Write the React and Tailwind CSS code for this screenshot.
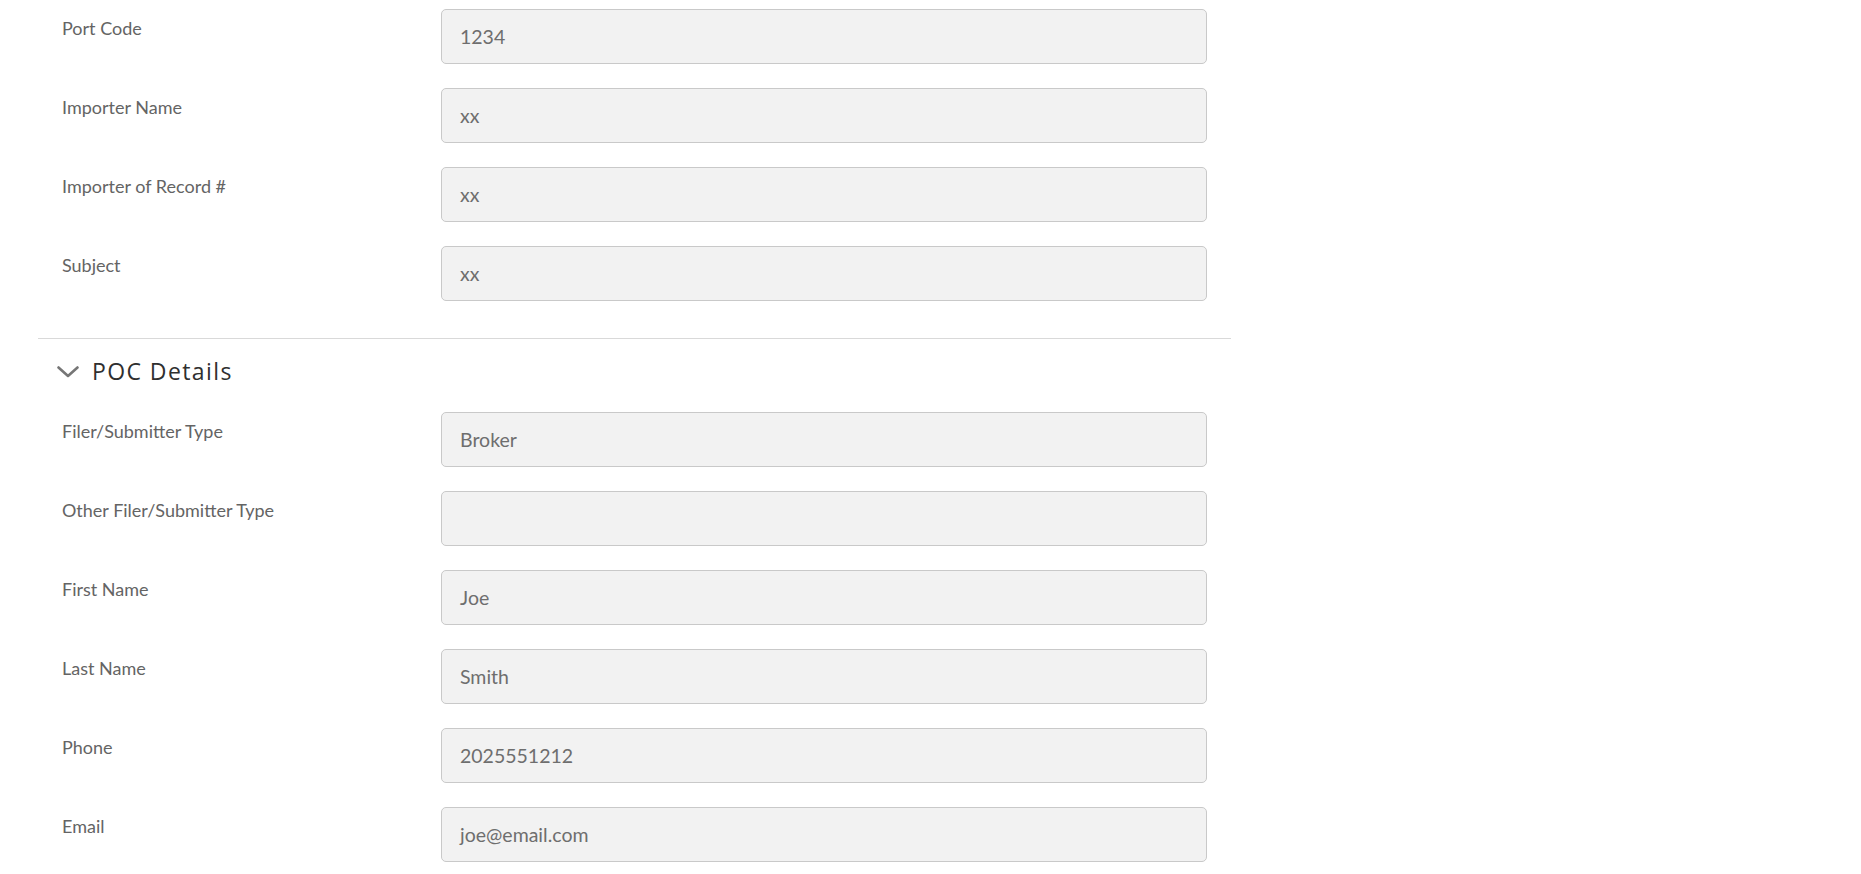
const importFields = [
  { label: "Port Code", value: "1234" },
  { label: "Importer Name", value: "xx" },
  { label: "Importer of Record #", value: "xx" },
  { label: "Subject", value: "xx" },
];

const pocFields = [
  { label: "Filer/Submitter Type", value: "Broker" },
  { label: "Other Filer/Submitter Type", value: "" },
  { label: "First Name", value: "Joe" },
  { label: "Last Name", value: "Smith" },
  { label: "Phone", value: "2025551212" },
  { label: "Email", value: "joe@email.com" },
];

function FieldRow({ label, value }) {
  return (
    <div className="flex items-start">
      <label className="w-[403px] shrink-0 pt-[6px] pl-[24px] text-[18px] leading-[26px] text-[#646464]">{label}</label>
      <div className="flex h-[55px] w-[766px] items-center rounded-[5px] border border-[#c9c9c9] bg-[#f2f2f2] px-[18px] text-[19.5px] text-[#6e6e6e]">
        {value}
      </div>
    </div>
  );
}

export default function App() {
  return (
    <div className="min-h-screen bg-white font-['Lato','Open_Sans',sans-serif]">
      <div className="ml-[38px] w-[1193px] pt-[9px]">
        <div className="flex flex-col gap-[24px] pb-[37px]">
          {importFields.map((field) => (
            <FieldRow key={field.label} {...field} />
          ))}
        </div>

        <div className="border-t border-[#d9d9d9]">
          <div className="flex h-[73px] items-start gap-[13px] pt-[18px] pl-[19px]">
            <svg width="22" height="12" viewBox="0 0 22 12" className="mt-[9px] shrink-0" fill="none">
              <polyline points="1.5,1.5 11,10 20.5,1.5" stroke="#767676" strokeWidth="2.6" strokeLinecap="round" strokeLinejoin="round" />
            </svg>
            <h2 className="font-['Open_Sans',sans-serif] text-[23px] leading-[28px] font-medium tracking-[1.4px] text-[#2f2f2f]">POC Details</h2>
          </div>
          <div className="flex flex-col gap-[24px]">
            {pocFields.map((field) => (
              <FieldRow key={field.label} {...field} />
            ))}
          </div>
        </div>
      </div>
    </div>
  );
}
